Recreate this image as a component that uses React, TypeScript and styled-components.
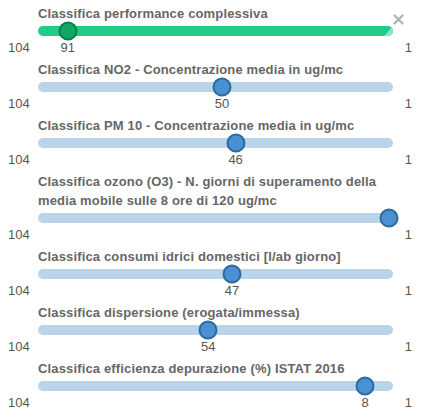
import React from "react";
import styled, { createGlobalStyle } from "styled-components";

const Global = createGlobalStyle`
  html, body { margin: 0; padding: 0; background: #fff; }
  body { font-family: "Liberation Sans", Arial, sans-serif; }
`;

type Item = { title: string; value: number; pos: number; active?: boolean };

const items: Item[] = [
  { title: "Classifica performance complessiva", value: 91, pos: 0.085, active: true },
  { title: "Classifica NO2 - Concentrazione media in ug/mc", value: 50, pos: 0.524 },
  { title: "Classifica PM 10 - Concentrazione media in ug/mc", value: 46, pos: 0.563 },
  {
    title: "Classifica ozono (O3) - N. giorni di superamento della media mobile sulle 8 ore di 120 ug/mc",
    value: 1,
    pos: 1,
  },
  { title: "Classifica consumi idrici domestici [l/ab giorno]", value: 47, pos: 0.553 },
  { title: "Classifica dispersione (erogata/immessa)", value: 54, pos: 0.485 },
  { title: "Classifica efficienza depurazione (%) ISTAT 2016", value: 8, pos: 0.932 },
];

const Panel = styled.div`
  position: relative;
  width: 430px;
  height: 417px;
  box-sizing: border-box;
  padding-top: 4px;
  display: flex;
  flex-direction: column;
  gap: 4px;
  overflow: hidden;
`;

const Row = styled.div`
  display: flex;
  flex-direction: column;
`;

const Title = styled.div`
  padding: 0 30px 0 38px;
  font-size: 13px;
  font-weight: bold;
  letter-spacing: 0.15px;
  line-height: 19px;
  color: #666;
`;

const SliderArea = styled.div`
  position: relative;
  margin: 0 37px 0 38px;
  height: 16px;
  display: flex;
  align-items: center;
`;

const Track = styled.div<{ $active?: boolean }>`
  position: relative;
  flex: 1;
  height: 10px;
  border-radius: 5px;
  background: ${(p) => (p.$active ? "#1fcd88" : "#bad5eb")};
  overflow: hidden;
`;

const TrackTip = styled.div`
  position: absolute;
  right: 0;
  top: 0;
  width: 9px;
  height: 10px;
  background: #8fe3c2;
  clip-path: polygon(100% 0, 100% 100%, 0 100%);
`;

const Handle = styled.div<{ $active?: boolean }>`
  position: absolute;
  top: 50%;
  width: 19px;
  height: 19px;
  box-sizing: border-box;
  border-radius: 50%;
  transform: translate(-50%, -50%);
  background: ${(p) => (p.$active ? "#14a464" : "#4a90d2")};
  border: 2px solid ${(p) => (p.$active ? "#0d7f4b" : "#2d6aa0")};
`;

const Labels = styled.div`
  position: relative;
  display: flex;
  justify-content: space-between;
  padding: 0 18px 0 8px;
  font-size: 13px;
  line-height: 17px;
  color: #555;
`;

const ValueLabel = styled.span`
  position: absolute;
  top: 0;
  transform: translateX(-50%);
`;

const Close = styled.svg`
  position: absolute;
  top: 14px;
  left: 393px;
`;

const TRACK_LEFT = 38;
const TRACK_SPAN = 351;

export default function App() {
  return (
    <>
      <Global />
      <Panel>
        {items.map((it, i) => (
          <Row key={i}>
            <Title>{it.title}</Title>
            <SliderArea>
              <Track $active={it.active}>{it.active && <TrackTip />}</Track>
              <Handle $active={it.active} style={{ left: `${it.pos * TRACK_SPAN}px` }} />
            </SliderArea>
            <Labels>
              <span>104</span>
              <ValueLabel style={{ left: `${TRACK_LEFT + it.pos * TRACK_SPAN}px` }}>
                {it.pos >= 1 ? "" : it.value}
              </ValueLabel>
              <span>1</span>
            </Labels>
          </Row>
        ))}
        <Close width="11" height="11" viewBox="0 0 11 11">
          <path d="M1.5 1.5 L9.5 9.5 M9.5 1.5 L1.5 9.5" stroke="#b3b3b3" strokeWidth="2.4" strokeLinecap="round" />
        </Close>
      </Panel>
    </>
  );
}
